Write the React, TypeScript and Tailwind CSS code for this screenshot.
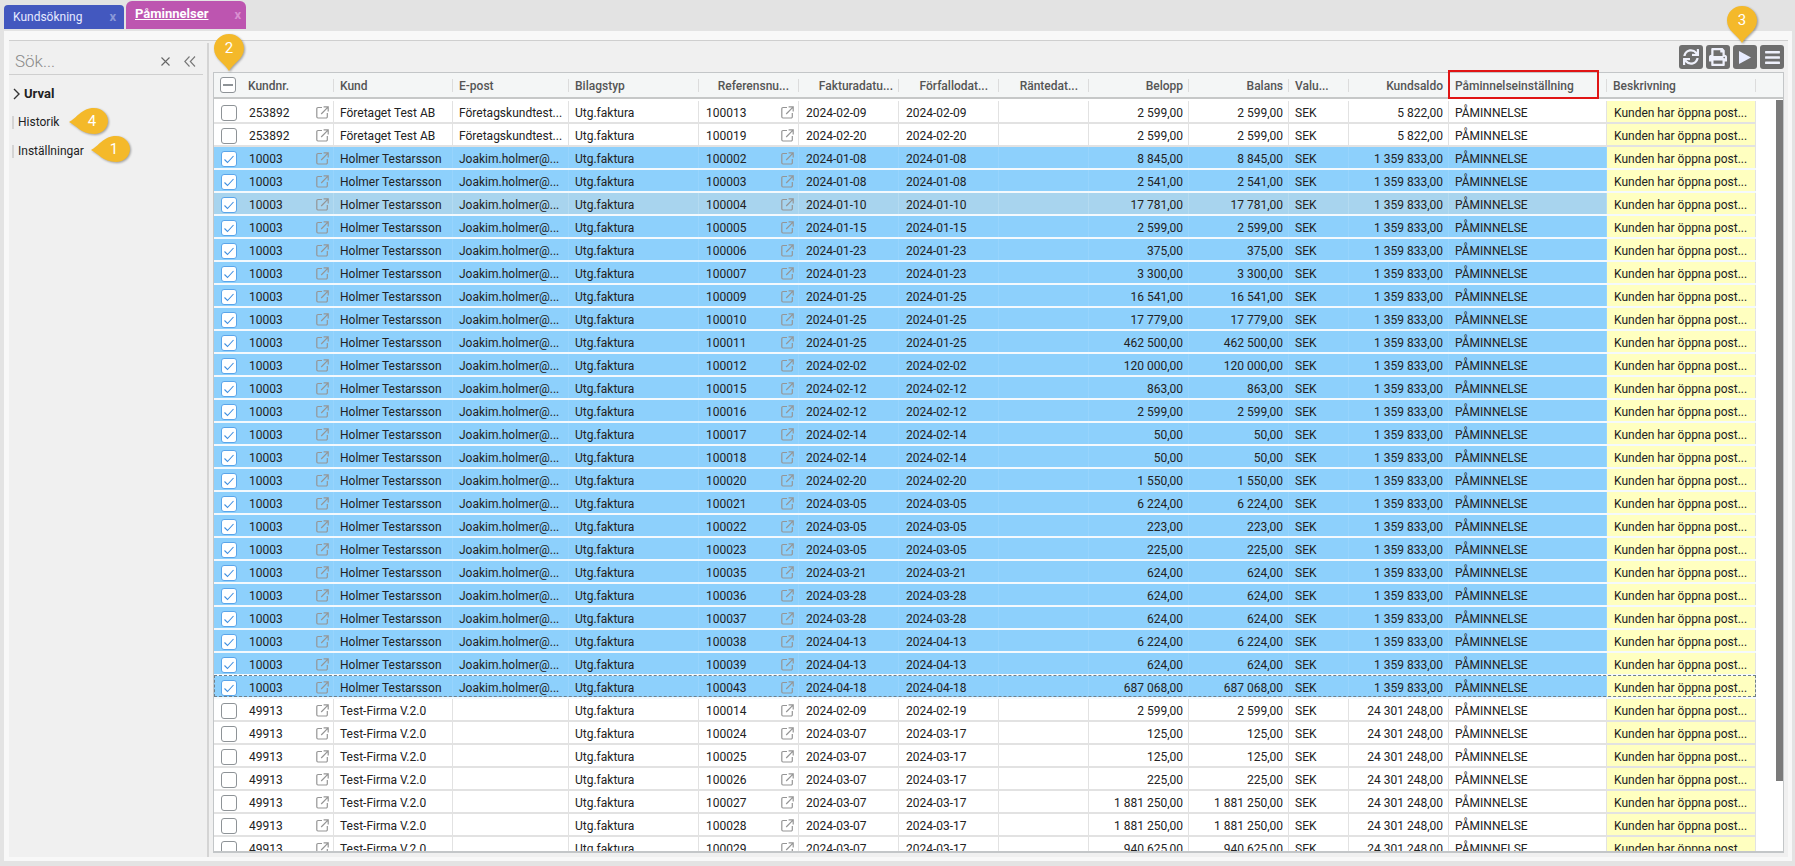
import React from "react";
import { FaSync, FaPrint, FaBars } from "react-icons/fa";

const COLS = [
  { w: "w-[120px]" },
  { w: "w-[119px]" },
  { w: "w-[116px]" },
  { w: "w-[130px]" },
  { w: "w-[100px]" },
  { w: "w-[100px]" },
  { w: "w-[100px]" },
  { w: "w-[90px]" },
  { w: "w-[100px]" },
  { w: "w-[100px]" },
  { w: "w-[60px]" },
  { w: "w-[100px]" },
  { w: "w-[158px]" },
  { w: "w-[149px]" },
];

type Row = {
  id: string;
  name: string;
  mail: string;
  ref: string;
  inv: string;
  due: string;
  amt: string;
  saldo: string;
  state: "none" | "sel" | "hover" | "focus";
};

const mk = (
  id: string,
  name: string,
  mail: string,
  saldo: string,
  state: Row["state"],
  list: [string, string, string, string][]
): Row[] =>
  list.map(([ref, inv, due, amt]) => ({ id, name, mail, saldo, state, ref, inv, due, amt }));

const selected = mk("10003", "Holmer Testarsson", "Joakim.holmer@...", "1 359 833,00", "sel", [
  ["100002", "2024-01-08", "2024-01-08", "8 845,00"],
  ["100003", "2024-01-08", "2024-01-08", "2 541,00"],
  ["100004", "2024-01-10", "2024-01-10", "17 781,00"],
  ["100005", "2024-01-15", "2024-01-15", "2 599,00"],
  ["100006", "2024-01-23", "2024-01-23", "375,00"],
  ["100007", "2024-01-23", "2024-01-23", "3 300,00"],
  ["100009", "2024-01-25", "2024-01-25", "16 541,00"],
  ["100010", "2024-01-25", "2024-01-25", "17 779,00"],
  ["100011", "2024-01-25", "2024-01-25", "462 500,00"],
  ["100012", "2024-02-02", "2024-02-02", "120 000,00"],
  ["100015", "2024-02-12", "2024-02-12", "863,00"],
  ["100016", "2024-02-12", "2024-02-12", "2 599,00"],
  ["100017", "2024-02-14", "2024-02-14", "50,00"],
  ["100018", "2024-02-14", "2024-02-14", "50,00"],
  ["100020", "2024-02-20", "2024-02-20", "1 550,00"],
  ["100021", "2024-03-05", "2024-03-05", "6 224,00"],
  ["100022", "2024-03-05", "2024-03-05", "223,00"],
  ["100023", "2024-03-05", "2024-03-05", "225,00"],
  ["100035", "2024-03-21", "2024-03-21", "624,00"],
  ["100036", "2024-03-28", "2024-03-28", "624,00"],
  ["100037", "2024-03-28", "2024-03-28", "624,00"],
  ["100038", "2024-04-13", "2024-04-13", "6 224,00"],
  ["100039", "2024-04-13", "2024-04-13", "624,00"],
  ["100043", "2024-04-18", "2024-04-18", "687 068,00"],
]).map((r) => ({
  ...r,
  state: (r.ref === "100004" ? "hover" : r.ref === "100043" ? "focus" : "sel") as Row["state"],
}));

const ROWS: Row[] = [
  ...mk("253892", "Företaget Test AB", "Företagskundtest...", "5 822,00", "none", [
    ["100013", "2024-02-09", "2024-02-09", "2 599,00"],
    ["100019", "2024-02-20", "2024-02-20", "2 599,00"],
  ]),
  ...selected,
  ...mk("49913", "Test-Firma V.2.0", "", "24 301 248,00", "none", [
    ["100014", "2024-02-09", "2024-02-19", "2 599,00"],
    ["100024", "2024-03-07", "2024-03-17", "125,00"],
    ["100025", "2024-03-07", "2024-03-17", "125,00"],
    ["100026", "2024-03-07", "2024-03-17", "225,00"],
    ["100027", "2024-03-07", "2024-03-17", "1 881 250,00"],
    ["100028", "2024-03-07", "2024-03-17", "1 881 250,00"],
    ["100029", "2024-03-07", "2024-03-17", "940 625,00"],
  ]),
];

function LinkIcon() {
  return (
    <svg width="13" height="13" viewBox="0 0 13 13" fill="none" stroke="#959595" strokeWidth="1.2" className="shrink-0">
      <path d="M6 1.500H2a1.200 1.200 0 0 0-1.200 1.200v8.100A1.200 1.200 0 0 0 2 12h8.100a1.200 1.200 0 0 0 1.200-1.200V7" />
      <path d="M5.200 8 12 1.200M7.600.9h4.600v4.600" />
    </svg>
  );
}

function Check({ kind }: { kind: "none" | "on" | "dash" }) {
  const border = kind === "on" ? "border-[#5aa5ea]" : "border-[#8e9397]";
  return (
    <span className={`flex h-4 w-4 shrink-0 items-center justify-center rounded-[3px] border-[1.5px] bg-white ${border}`}>
      {kind === "on" && (
        <svg width="12" height="12" viewBox="0 0 12 12" fill="none" stroke="#3f8fe0" strokeWidth="1.1">
          <path d="M1.500 6.500 4.500 9.500 10.500 3" />
        </svg>
      )}
      {kind === "dash" && <span className="h-[1.5px] w-2.5 bg-[#8e9397]" />}
    </span>
  );
}

function Head({ col, label, pad }: { col: number; label: string; pad: string }) {
  return (
    <div className={`${COLS[col].w} flex h-full shrink-0 items-center`}>
      <div className={`flex h-[13px] min-w-0 flex-1 items-center border-r border-[#dcdcdc] ${pad}`}>
        <span className="mt-px whitespace-nowrap text-[12px] font-medium text-[#555]">{label}</span>
      </div>
    </div>
  );
}

function Cell({
  col,
  right,
  line,
  children,
  className = "",
}: {
  col: number;
  right?: boolean;
  line: string;
  children?: React.ReactNode;
  className?: string;
}) {
  return (
    <div
      className={`${COLS[col].w} flex h-full shrink-0 items-center overflow-hidden whitespace-nowrap border-r pt-[2px] ${line} ${
        right ? "justify-end pr-[5px]" : "pl-[6px]"
      } ${className}`}
    >
      {children}
    </div>
  );
}

function GridRow({ r }: { r: Row }) {
  const sel = r.state !== "none";
  const bg = r.state === "hover" ? "bg-[#a8d4ee]" : sel ? "bg-[#8dd0fc]" : "bg-white";
  const line = r.state === "hover" ? "border-[#b5dbf1]" : sel ? "border-[#97d4fd]" : "border-[#e2e2e2]";
  const outer = sel ? "border-[#f4f9fd]" : "border-[#e2e2e2]";
  return (
    <div className={`relative flex h-[23px] w-[1542px] shrink-0 border-b-2 text-[12px] text-[#222] ${bg} ${outer}`}>
      <div className={`${COLS[0].w} flex h-full shrink-0 items-center border-r pt-[2px] ${line} pl-[7px] pr-[4px]`}>
        <Check kind={sel ? "on" : "none"} />
        <span className="ml-[12px] flex-1">{r.id}</span>
        <LinkIcon />
      </div>
      <Cell col={1} line={line}>{r.name}</Cell>
      <Cell col={2} line={line}>{r.mail}</Cell>
      <Cell col={3} line={line}>Utg.faktura</Cell>
      <Cell col={4} line={line} className="justify-between !pl-[7px] pr-[4px]">
        <span>{r.ref}</span>
        <LinkIcon />
      </Cell>
      <Cell col={5} line={line} className="!pl-[7px]">{r.inv}</Cell>
      <Cell col={6} line={line} className="!pl-[7px]">{r.due}</Cell>
      <Cell col={7} line={line} />
      <Cell col={8} line={line} right>{r.amt}</Cell>
      <Cell col={9} line={line} right>{r.amt}</Cell>
      <Cell col={10} line={line}>SEK</Cell>
      <Cell col={11} line={line} right>{r.saldo}</Cell>
      <Cell col={12} line={line}>PÅMINNELSE</Cell>
      <Cell col={13} line="border-[#e2e2e2]" className="bg-[#ffffc0] !pl-[7px]">Kunden har öppna post...</Cell>
      {r.state === "focus" && (
        <div className="pointer-events-none absolute inset-x-0 top-[-1px] bottom-0 border border-dashed border-[#6f7f8a]" />
      )}
    </div>
  );
}

function PinDown({ n, className }: { n: string; className: string }) {
  return (
    <div className={`pointer-events-none absolute h-[39px] w-[32px] ${className}`}>
      <svg width="32" height="39" viewBox="0 0 32 39" className="absolute inset-0 drop-shadow-[1px_1px_1px_rgba(0,0,0,0.35)]">
        <path d="M16 38C12.500 31 1 26 1 15.500 1 7.300 7.700 1 16 1s15 6.300 15 14.500C31 26 19.500 31 16 38Z" fill="#f4b92a" />
      </svg>
      <span className="absolute inset-x-0 top-[6px] text-center text-[15px] leading-[18px] text-white">{n}</span>
    </div>
  );
}

function PinLeft({ n, className }: { n: string; className: string }) {
  return (
    <div className={`pointer-events-none absolute h-[28px] w-[41px] ${className}`}>
      <svg width="41" height="28" viewBox="0 0 41 28" className="absolute inset-0 drop-shadow-[1px_1px_1px_rgba(0,0,0,0.35)]">
        <path d="M1 15C8 12 13 1 26 1c8 0 14 6 14 13s-6 13-14 13C13 27 8 18 1 15Z" fill="#f4b92a" />
      </svg>
      <span className="absolute left-[17px] top-[5px] w-[14px] text-center text-[15px] leading-[18px] text-white">{n}</span>
    </div>
  );
}

function ToolBtn({ children }: { children: React.ReactNode }) {
  return (
    <div className="flex h-6 w-6 items-center justify-center rounded-[3px] bg-[#6e6e6e] text-[#eef0fb]">{children}</div>
  );
}

export default function App() {
  return (
    <div className="relative flex h-[866px] w-[1795px] flex-col overflow-hidden bg-[#e3e3e3] font-['Roboto',sans-serif]">
      {/* Tabs */}
      <div className="flex h-[29px] shrink-0 items-end gap-[2px] pl-1">
        <div className="flex h-6 w-[120px] items-center justify-between rounded-t-[4px] bg-[#4358bf] pl-[9px] pr-[8px] text-[12px] text-[#e6eaff]">
          <span>Kundsökning</span>
          <span className="text-[13px] font-bold text-[#8a98d8]">x</span>
        </div>
        <div className="flex h-7 w-[120px] items-start justify-between rounded-t-[6px] bg-[#bd55b0] pl-[9px] pr-[5px] pt-[3px] text-[13px] text-white">
          <span className="font-bold underline">Påminnelser</span>
          <span className="mt-[3px] text-[13px] font-bold leading-[16px] text-[#d98fd0]">x</span>
        </div>
      </div>

      {/* Panel */}
      <div className="mb-[5px] ml-1 mr-[3px] mt-[2px] flex min-h-0 flex-1 flex-col bg-[#f8f8f8] pb-1 pl-[5px] pr-1 pt-[9px]">
        <div className="flex min-h-0 flex-1 border-t border-[#cfcfcf] bg-[#f0f0f0]">
          {/* Sidebar */}
          <aside className="mt-[2px] flex w-[200px] shrink-0 flex-col border-r-2 border-[#d4d4d4] pr-[4px]">
            <div className="flex h-[32px] items-center justify-between border-b border-[#cfcfcf] pl-[6px] pr-[7px] pt-[6px]">
              <span className="text-[17px] font-light text-[#8a8a8a]">Sök...</span>
              <span className="flex items-center gap-[14px]">
                <svg width="9" height="9" viewBox="0 0 9 9" stroke="#666" strokeWidth="1.100" fill="none">
                  <path d="M.5.500l8 8M8.500.5l-8 8" />
                </svg>
                <svg width="12" height="11" viewBox="0 0 12 11" stroke="#777" strokeWidth="1.100" fill="none">
                  <path d="M5.500 .5 .8 5.500l4.700 5M11 .5 6.300 5.500l4.700 5" />
                </svg>
              </span>
            </div>
            <div className="mt-[9px] flex items-center pl-[4px] text-[13px] font-bold text-[#222]">
              <svg width="7" height="12" viewBox="0 0 7 12" fill="none" stroke="#333" strokeWidth="1.400" className="mr-[4px]">
                <path d="M1 1l5 5-5 5" />
              </svg>
              Urval
            </div>
            <div className="ml-[3px] mt-[12px] flex h-[13px] items-center border-l-2 border-[#d4d4d4] pl-[4px] text-[12px] text-[#222]">Historik</div>
            <div className="ml-[3px] mt-[16px] flex h-[13px] items-center border-l-2 border-[#d4d4d4] pl-[4px] text-[12px] text-[#222]">Inställningar</div>
          </aside>

          {/* Main */}
          <main className="flex min-w-0 flex-1 flex-col pb-1 pl-[4px] pr-[4px]">
            <div className="flex h-[31px] shrink-0 items-end justify-end gap-[3px] pb-[3px]">
              <ToolBtn><FaSync size={16} /></ToolBtn>
              <ToolBtn><FaPrint size={18} /></ToolBtn>
              <ToolBtn>
                <svg width="14" height="15" viewBox="0 0 14 15" fill="#e8ecff"><path d="M1 1v13l12-6.500Z" /></svg>
              </ToolBtn>
              <ToolBtn><FaBars size={17} /></ToolBtn>
            </div>
            <div className="flex min-h-0 flex-1 flex-col border border-b-2 border-[#c3c6c8] bg-white">
              <div className="flex h-[26px] shrink-0 border-b-2 border-[#c6c8c8] bg-[#f4f6f6]">
                <div className={`${COLS[0].w} flex h-full shrink-0 items-center pl-[6px]`}>
                  <Check kind="dash" />
                  <div className="ml-[12px] flex h-[13px] flex-1 items-center border-r border-[#dcdcdc] text-[12px] font-medium text-[#555]">
                    <span className="mt-px">Kundnr.</span>
                  </div>
                </div>
                <Head col={1} label="Kund" pad="pl-[6px]" />
                <Head col={2} label="E-post" pad="pl-[6px]" />
                <Head col={3} label="Bilagstyp" pad="pl-[6px]" />
                <Head col={4} label="Referensnu..." pad="justify-end pr-[9px]" />
                <Head col={5} label="Fakturadatu..." pad="justify-end pr-[5px]" />
                <Head col={6} label="Förfallodat..." pad="justify-end pr-[10px]" />
                <Head col={7} label="Räntedat..." pad="justify-end pr-[10px]" />
                <Head col={8} label="Belopp" pad="justify-end pr-[5px]" />
                <Head col={9} label="Balans" pad="justify-end pr-[5px]" />
                <Head col={10} label="Valu..." pad="pl-[6px]" />
                <Head col={11} label="Kundsaldo" pad="justify-end pr-[5px]" />
                <Head col={12} label="Påminnelseinställning" pad="pl-[6px]" />
                <Head col={13} label="Beskrivning" pad="pl-[6px]" />
              </div>
              <div className="flex min-h-0 flex-1 justify-between overflow-hidden">
                <div className="flex min-w-0 flex-col overflow-hidden pt-[2px]">
                  {ROWS.map((r) => (
                    <GridRow key={r.ref} r={r} />
                  ))}
                </div>
                <div className="mt-px h-[681px] w-[7px] shrink-0 bg-[#7a7a7a]" />
              </div>
            </div>
          </main>
        </div>
      </div>

      {/* Overlays */}
      <div className="pointer-events-none absolute left-[1448px] top-[70px] h-[29px] w-[151px] border-2 border-[#e01515]" />
      <PinDown n="2" className="left-[213px] top-[33px]" />
      <PinDown n="3" className="left-[1726px] top-[5px]" />
      <PinLeft n="4" className="left-[68px] top-[107px]" />
      <PinLeft n="1" className="left-[90px] top-[135px]" />
    </div>
  );
}
